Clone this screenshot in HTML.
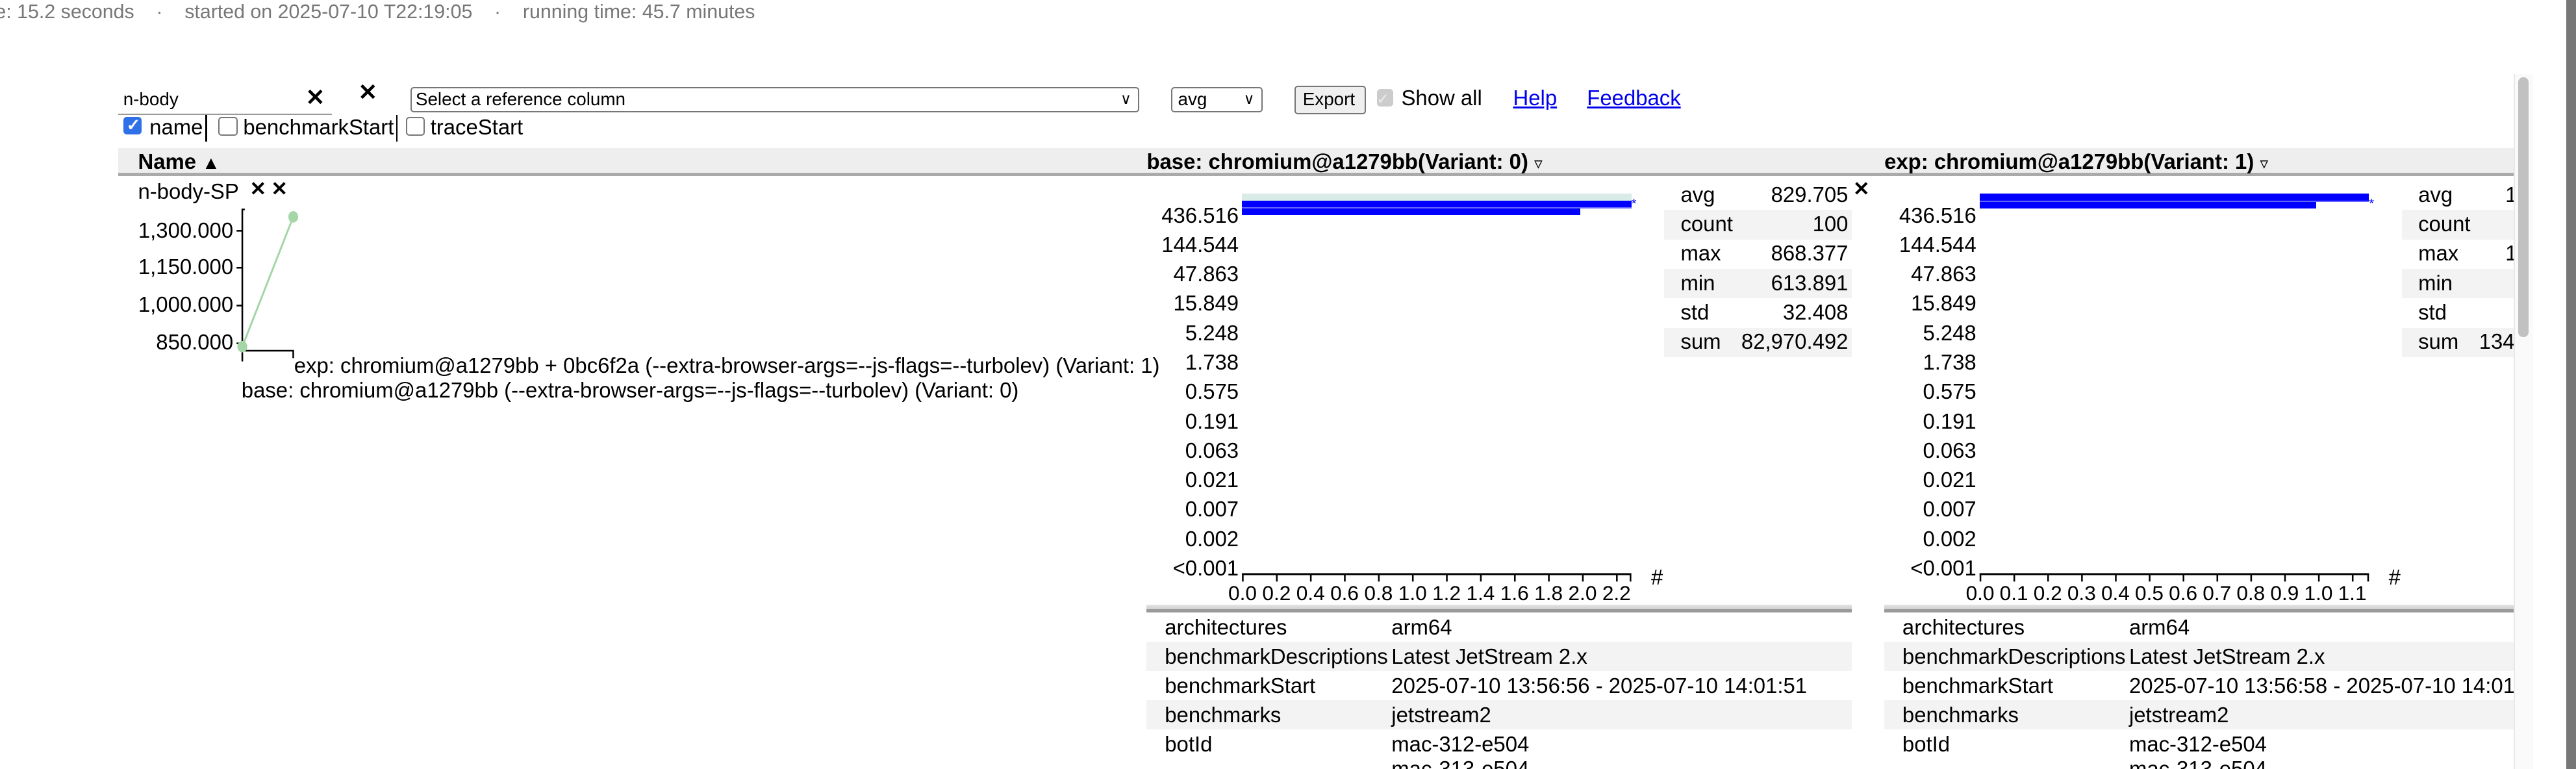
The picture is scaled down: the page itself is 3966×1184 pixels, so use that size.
<!DOCTYPE html>
<html><head><meta charset="utf-8">
<style>
html,body{margin:0;padding:0;background:#fff;width:3966px;height:1184px;overflow:hidden}
#z{zoom:2.5293;position:relative;width:1568px;height:468px;overflow:hidden;font-family:"Liberation Sans",Arial,sans-serif;font-size:13px;color:#000}
.a{position:absolute;white-space:nowrap;line-height:15px}
.r{text-align:right}
.b{font-weight:bold}
.g{background:#f3f3f3}
.cb{position:absolute;width:10px;height:10px;border:1px solid #767676;border-radius:2px;background:#fff}
</style></head><body><div id="z">
<div class="a" style="left:-3px;top:0;color:#777;font-size:12px">e: 15.2 seconds &nbsp;&nbsp; · &nbsp;&nbsp; started on 2025-07-10 T22:19:05 &nbsp;&nbsp; · &nbsp;&nbsp; running time: 45.7 minutes</div>

<!-- filter -->
<div class="a" style="left:75px;top:53px;font-size:11px">n-body</div>
<div style="position:absolute;left:72px;top:69px;width:130px;height:1px;background:#999"></div>
<div class="a b" style="left:186px;top:52px;font-size:14px">✕</div>
<div class="a b" style="left:218px;top:49px;font-size:14px">✕</div>
<div style="position:absolute;left:250px;top:53px;width:442px;height:14px;border:1px solid #767676;border-radius:2px"></div>
<div class="a" style="left:253px;top:53px;font-size:11px">Select a reference column</div>
<div class="a" style="left:682px;top:53px;font-size:9px">∨</div>
<div style="position:absolute;left:713px;top:53px;width:54px;height:14px;border:1px solid #767676;border-radius:2px"></div>
<div class="a" style="left:717px;top:53px;font-size:11px">avg</div>
<div class="a" style="left:757px;top:53px;font-size:9px">∨</div>
<div style="position:absolute;left:788px;top:52px;width:42px;height:16px;border:1px solid #767676;border-radius:2px;background:#efefef"></div>
<div class="a" style="left:793px;top:53px;font-size:11px">Export</div>
<div style="position:absolute;left:838px;top:54px;width:10px;height:11px;background:#ccc;border-radius:2px"></div>
<div class="a" style="left:838px;top:53px;font-size:9px;color:#eee">✓</div>
<div class="a" style="left:853px;top:52px">Show all</div>
<div class="a" style="left:921px;top:52px;color:#00e;text-decoration:underline">Help</div>
<div class="a" style="left:966px;top:52px;color:#00e;text-decoration:underline">Feedback</div>

<!-- column checkboxes -->
<div style="position:absolute;left:75px;top:71px;width:11px;height:11px;background:#2f6fe8;border-radius:2px"></div>
<div class="a" style="left:77px;top:69px;font-size:10px;color:#fff;font-weight:bold">✓</div>
<div class="a" style="left:91px;top:70px">name</div>
<div style="position:absolute;left:125px;top:70px;width:1px;height:16px;background:#000"></div>
<div class="cb" style="left:133px;top:71px"></div>
<div class="a" style="left:148px;top:70px">benchmarkStart</div>
<div style="position:absolute;left:241px;top:70px;width:1px;height:16px;background:#000"></div>
<div class="cb" style="left:247px;top:71px"></div>
<div class="a" style="left:262px;top:70px">traceStart</div>

<!-- header -->
<div style="position:absolute;left:72px;top:90px;width:1458px;height:15px;background:#eee;border-bottom:2px solid #aaa"></div>
<div class="a b" style="left:84px;top:91px">Name <span style="font-size:11px">▲</span></div>
<div class="a b" style="left:698px;top:91px">base: chromium@a1279bb(Variant: 0) <span style="font-weight:normal;font-size:10px">▿</span></div>
<div class="a b" style="left:1147px;top:91px">exp: chromium@a1279bb(Variant: 1) <span style="font-weight:normal;font-size:10px">▿</span></div>

<!-- scrollbar -->
<div style="position:absolute;left:1530px;top:45px;width:11px;height:423px;background:#fafafa;border-left:1px solid #e8e8e8"></div>
<div style="position:absolute;left:1533px;top:47px;width:6px;height:158px;background:#c1c1c1;border-radius:3px"></div>
<div style="position:absolute;left:1562px;top:0;width:6px;height:468px;background:#777"></div>

<!-- name cell -->
<div class="a" style="left:84px;top:109px">n-body-SP</div>
<div class="a b" style="left:152px;top:108px;font-size:12px">✕</div>
<div class="a b" style="left:165px;top:108px;font-size:12px">✕</div>
<div class="a r" style="left:60px;width:82px;top:133px">1,300.000</div>
<div class="a r" style="left:60px;width:82px;top:155px">1,150.000</div>
<div class="a r" style="left:60px;width:82px;top:178px">1,000.000</div>
<div class="a r" style="left:60px;width:82px;top:201px">850.000</div>
<svg style="position:absolute;left:0;top:0" width="200" height="240">
<path d="M149 127.5H147.5V220M144 140.5H147.5M144 163H147.5M144 186H147.5M144 209H147.5M147.5 213.5H178.5V218" stroke="#000" fill="none" stroke-width="1"/>
<line x1="147.5" y1="211" x2="178.5" y2="132" stroke="#a5d6a7" stroke-width="1.2"/>
<ellipse cx="147.5" cy="211" rx="3" ry="3.5" fill="#a5d6a7"/>
<ellipse cx="178.5" cy="132" rx="3" ry="3.5" fill="#a5d6a7"/>
</svg>
<div class="a" style="left:179px;top:215px">exp: chromium@a1279bb + 0bc6f2a (--extra-browser-args=--js-flags=--turbolev) (Variant: 1)</div>
<div class="a" style="left:147px;top:230px">base: chromium@a1279bb (--extra-browser-args=--js-flags=--turbolev) (Variant: 0)</div>

<!-- BASE column -->
<div style="position:absolute;left:756px;top:118px;width:237px;height:4px;background:#d8ebe6"></div>
<div style="position:absolute;left:756px;top:122px;width:237px;height:4px;background:#00f;border-bottom:1px solid #66f"></div>
<div style="position:absolute;left:756px;top:127px;width:206px;height:4px;background:#00f"></div>
<div class="a" style="left:993px;top:117px;font-size:8px;color:#00f">*</div>

<div style="position:absolute;left:1013px;top:110px;width:114px">
<div style="height:17.9px;position:relative"><span class="a" style="left:10px;top:1px">avg</span><span class="a" style="right:2px;top:1px">829.705</span></div>
<div class="g" style="height:17.9px;position:relative"><span class="a" style="left:10px;top:1px">count</span><span class="a" style="right:2px;top:1px">100</span></div>
<div style="height:17.9px;position:relative"><span class="a" style="left:10px;top:1px">max</span><span class="a" style="right:2px;top:1px">868.377</span></div>
<div class="g" style="height:17.9px;position:relative"><span class="a" style="left:10px;top:1px">min</span><span class="a" style="right:2px;top:1px">613.891</span></div>
<div style="height:17.9px;position:relative"><span class="a" style="left:10px;top:1px">std</span><span class="a" style="right:2px;top:1px">32.408</span></div>
<div class="g" style="height:17.9px;position:relative"><span class="a" style="left:10px;top:1px">sum</span><span class="a" style="right:2px;top:1px">82,970.492</span></div>
</div>
<div class="a b" style="left:1128px;top:108px;font-size:12px">✕</div>

<!-- EXP column -->
<div style="position:absolute;left:1205px;top:118px;width:237px;height:4px;background:#00f;border-bottom:1px solid #66f"></div>
<div style="position:absolute;left:1205px;top:123px;width:205px;height:4px;background:#00f"></div>
<div class="a" style="left:1442px;top:117px;font-size:8px;color:#00f">*</div>
<div style="position:absolute;left:1462px;top:110px;width:68px;overflow:hidden;height:108px">
<div style="height:17.9px;position:relative"><span class="a" style="left:10px;top:1px">avg</span><span class="a" style="left:63px;top:1px">1</span></div>
<div class="g" style="height:17.9px;position:relative"><span class="a" style="left:10px;top:1px">count</span></div>
<div style="height:17.9px;position:relative"><span class="a" style="left:10px;top:1px">max</span><span class="a" style="left:63px;top:1px">1</span></div>
<div class="g" style="height:17.9px;position:relative"><span class="a" style="left:10px;top:1px">min</span></div>
<div style="height:17.9px;position:relative"><span class="a" style="left:10px;top:1px">std</span></div>
<div class="g" style="height:17.9px;position:relative"><span class="a" style="left:10px;top:1px">sum</span><span class="a" style="left:47px;top:1px">134</span></div>
</div>

<!-- y labels both -->
<div style="position:absolute;left:690px;top:122px;width:64px;line-height:17.9px;text-align:right">436.516<br>144.544<br>47.863<br>15.849<br>5.248<br>1.738<br>0.575<br>0.191<br>0.063<br>0.021<br>0.007<br>0.002<br>&lt;0.001</div>
<div style="position:absolute;left:1139px;top:122px;width:64px;line-height:17.9px;text-align:right">436.516<br>144.544<br>47.863<br>15.849<br>5.248<br>1.738<br>0.575<br>0.191<br>0.063<br>0.021<br>0.007<br>0.002<br>&lt;0.001</div>

<!-- x axes -->
<svg style="position:absolute;left:0;top:0" width="1530" height="370">
<g stroke="#000" fill="none">
<path d="M756 349.5H993M1205 349.5H1442" stroke-width="1.2"/>
<path d="M756.5 349v5M777.2 349v5M797.9 349v5M818.6 349v5M839.3 349v5M860 349v5M880.7 349v5M901.4 349v5M922.1 349v5M942.8 349v5M963.5 349v5M984.2 349v5M992.5 349v5"/>
<path d="M1205.5 349v5M1226.1 349v5M1246.7 349v5M1267.3 349v5M1287.9 349v5M1308.5 349v5M1329.1 349v5M1349.7 349v5M1370.3 349v5M1390.9 349v5M1411.5 349v5M1432.1 349v5M1441.5 349v5"/>
</g>
</svg>
<div class="a" style="left:1005px;top:344px">#</div>
<div class="a" style="left:1454px;top:344px">#</div>
<div style="position:absolute;left:746px;top:354px;font-size:12.5px;line-height:15px;white-space:nowrap"><span style="display:inline-block;width:20.7px;text-align:center">0.0</span><span style="display:inline-block;width:20.7px;text-align:center">0.2</span><span style="display:inline-block;width:20.7px;text-align:center">0.4</span><span style="display:inline-block;width:20.7px;text-align:center">0.6</span><span style="display:inline-block;width:20.7px;text-align:center">0.8</span><span style="display:inline-block;width:20.7px;text-align:center">1.0</span><span style="display:inline-block;width:20.7px;text-align:center">1.2</span><span style="display:inline-block;width:20.7px;text-align:center">1.4</span><span style="display:inline-block;width:20.7px;text-align:center">1.6</span><span style="display:inline-block;width:20.7px;text-align:center">1.8</span><span style="display:inline-block;width:20.7px;text-align:center">2.0</span><span style="display:inline-block;width:20.7px;text-align:center">2.2</span></div>
<div style="position:absolute;left:1195px;top:354px;font-size:12.5px;line-height:15px;white-space:nowrap"><span style="display:inline-block;width:20.6px;text-align:center">0.0</span><span style="display:inline-block;width:20.6px;text-align:center">0.1</span><span style="display:inline-block;width:20.6px;text-align:center">0.2</span><span style="display:inline-block;width:20.6px;text-align:center">0.3</span><span style="display:inline-block;width:20.6px;text-align:center">0.4</span><span style="display:inline-block;width:20.6px;text-align:center">0.5</span><span style="display:inline-block;width:20.6px;text-align:center">0.6</span><span style="display:inline-block;width:20.6px;text-align:center">0.7</span><span style="display:inline-block;width:20.6px;text-align:center">0.8</span><span style="display:inline-block;width:20.6px;text-align:center">0.9</span><span style="display:inline-block;width:20.6px;text-align:center">1.0</span><span style="display:inline-block;width:20.6px;text-align:center">1.1</span></div>

<!-- metadata -->
<div style="position:absolute;left:698px;top:368px;width:429px;height:3px;background:linear-gradient(#e4e4e4,#cfcfcf);border-bottom:2px solid #999"></div>
<div style="position:absolute;left:1147px;top:368px;width:383px;height:3px;background:linear-gradient(#e4e4e4,#cfcfcf);border-bottom:2px solid #999"></div>
<div style="position:absolute;left:698px;top:373px;width:429px">
<div style="height:17.8px;position:relative"><span class="a" style="left:11px;top:1.5px">architectures</span><span class="a" style="left:149px;top:1.5px">arm64</span></div>
<div class="g" style="height:17.8px;position:relative"><span class="a" style="left:11px;top:1.5px">benchmarkDescriptions</span><span class="a" style="left:149px;top:1.5px">Latest JetStream 2.x</span></div>
<div style="height:17.8px;position:relative"><span class="a" style="left:11px;top:1.5px">benchmarkStart</span><span class="a" style="left:149px;top:1.5px">2025-07-10 13:56:56 - 2025-07-10 14:01:51</span></div>
<div class="g" style="height:17.8px;position:relative"><span class="a" style="left:11px;top:1.5px">benchmarks</span><span class="a" style="left:149px;top:1.5px">jetstream2</span></div>
<div style="height:17.8px;position:relative"><span class="a" style="left:11px;top:1.5px">botId</span><span class="a" style="left:149px;top:1.5px">mac-312-e504<br>mac-313-e504</span></div>
</div>
<div style="position:absolute;left:1147px;top:373px;width:383px;overflow:hidden;height:95px">
<div style="height:17.8px;position:relative"><span class="a" style="left:11px;top:1.5px">architectures</span><span class="a" style="left:149px;top:1.5px">arm64</span></div>
<div class="g" style="height:17.8px;position:relative"><span class="a" style="left:11px;top:1.5px">benchmarkDescriptions</span><span class="a" style="left:149px;top:1.5px">Latest JetStream 2.x</span></div>
<div style="height:17.8px;position:relative"><span class="a" style="left:11px;top:1.5px">benchmarkStart</span><span class="a" style="left:149px;top:1.5px">2025-07-10 13:56:58 - 2025-07-10 14:01:49</span></div>
<div class="g" style="height:17.8px;position:relative"><span class="a" style="left:11px;top:1.5px">benchmarks</span><span class="a" style="left:149px;top:1.5px">jetstream2</span></div>
<div style="height:17.8px;position:relative"><span class="a" style="left:11px;top:1.5px">botId</span><span class="a" style="left:149px;top:1.5px">mac-312-e504<br>mac-313-e504</span></div>
</div>
</div></body></html>
